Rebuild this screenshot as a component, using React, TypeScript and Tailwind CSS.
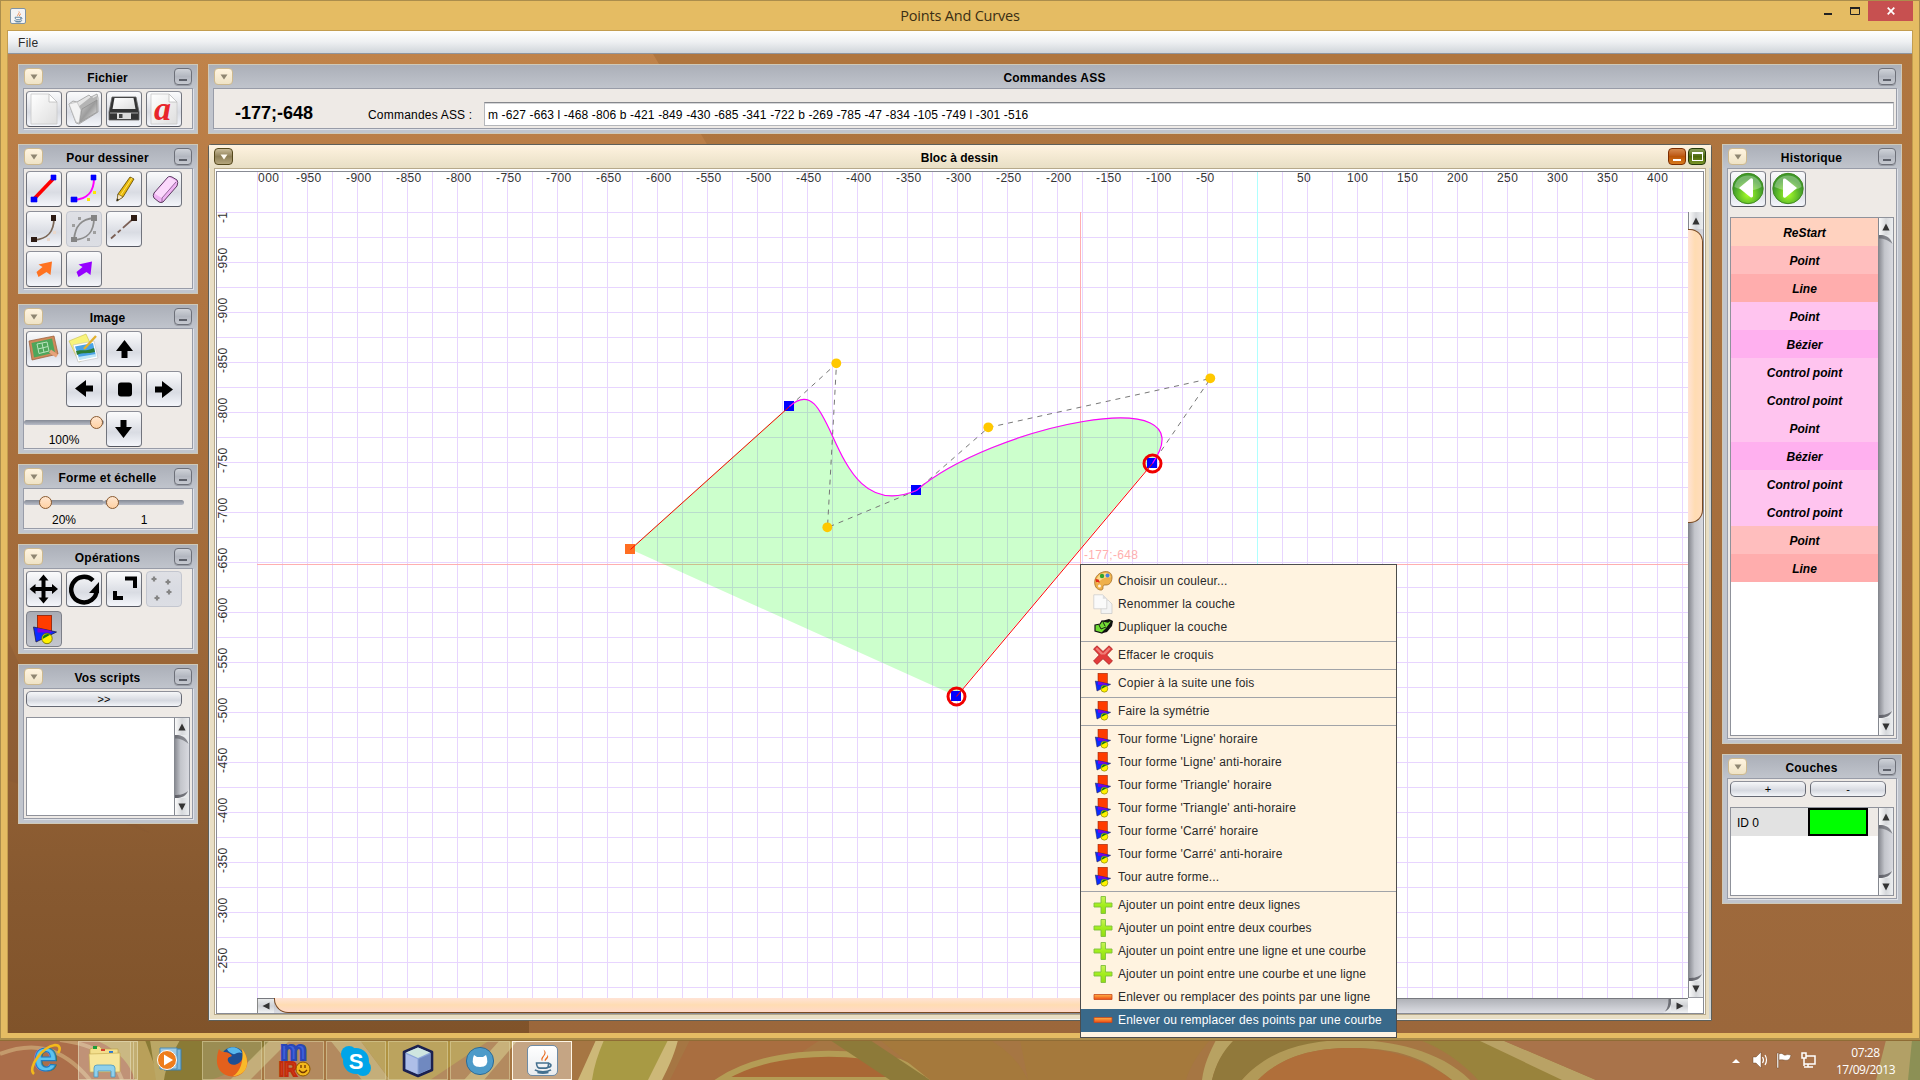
import React from "react";

type Kids = { children?: React.ReactNode };

const DropButton = ({ active = false }: { active?: boolean }) => (
  <div
    className={
      active
        ? "flex h-[17px] w-[19px] items-center justify-center rounded-[4px] border border-[#55481c] bg-linear-to-b from-[#cbbd9a] via-[#8f8058] to-[#b5a67c]"
        : "flex h-[17px] w-[19px] items-center justify-center rounded-[4px] border border-[#cdb98f] bg-linear-to-b from-[#fff4e0] to-[#efe3c6]"
    }
  >
    <svg width="8" height="6" viewBox="0 0 8 6">
      <path d="M0.5 0.5h7L4 5.5z" fill={active ? "#fffaf0" : "#8f8672"} />
    </svg>
  </div>
);

const MinButton = () => (
  <div className="flex h-[17px] w-[18px] items-end justify-center rounded-[4px] border border-[#6d7079] bg-linear-to-b from-[#cfd2d8] via-[#b3b7c0] to-[#c6c9d0] pb-[3px] shadow-[0_1px_0_#9a9da6]">
    <div className="h-[2px] w-2 bg-[#5d6069]" />
  </div>
);

function Panel({ title, className, children }: { title: string; className: string } & Kids) {
  return (
    <section
      className={
        "flex shrink-0 flex-col border border-[#cfc9b8] bg-[#c1c5cd] px-1 pb-1 " + className
      }
    >
      <header className="-mx-1 flex h-[23px] shrink-0 items-center justify-between bg-linear-to-b from-[#abafb8] to-[#c0c4cc] pl-[5px] pr-[5px]">
        <DropButton />
        <h2 className="pt-[3px] pr-[2px] text-[12px] leading-[14px] font-bold tracking-[0.2px] text-black">{title}</h2>
        <MinButton />
      </header>
      <div className="min-h-0 flex-1 border border-[#989ca8] bg-[#eeeae6] pl-[2px] pt-[2px] shadow-[1px_1px_0_#dfe2e8]">
        {children}
      </div>
    </section>
  );
}

function Tool({ disabled, pressed, children }: { disabled?: boolean; pressed?: boolean } & Kids) {
  const tone = disabled
    ? "border-[#c3c6cf] bg-linear-to-b from-[#dfe0e5] via-[#d9dbe2] to-[#dcdee4]"
    : pressed
      ? "border-[#7c7f88] bg-linear-to-b from-[#a9acb5] via-[#b7bac3] to-[#c3c6ce]"
      : "border-t-[#8e9099] border-x-[#71747d] border-b-[#555862] bg-linear-to-b from-[#fbfbfc] via-[#d9dce3] via-60% to-[#f4f6fb]";
  return (
    <div className={"flex size-9 shrink-0 items-center justify-center rounded-[4px] border " + tone}>
      {children}
    </div>
  );
}

const Icon = ({ children, size = 34, view = "0 0 34 34" }: { size?: number; view?: string } & Kids) => (
  <svg width={size} height={size} viewBox={view} className="shrink-0 overflow-visible">
    {children}
  </svg>
);

const Page = () => (
  <>
    <path d="M4 2h18l8 8v22H4z" fill="url(#paper)" stroke="#c9c9c9" strokeWidth="0.8" />
    <path d="M22 2l8 8h-8z" fill="#fff" stroke="#bdbdbd" strokeWidth="0.8" />
  </>
);

const ShapesIcon = ({ size = 34, view = "0 0 34 34" }: { size?: number; view?: string }) => (
  <Icon size={size} view={view}>
    <rect x="10.500" y="3.500" width="14" height="16" fill="#ff3c00" stroke="#8d1c00" strokeWidth="0.8" />
    <path d="M6.500 15l23 5L9 30z" fill="#0a2bff" stroke="#20204a" strokeWidth="0.8" />
    <path d="M10.500 15.900L24.500 19v1.500h-14z" fill="#7d00e0" />
    <circle cx="20" cy="26.500" r="5.200" fill="#fff200" stroke="#6b6600" strokeWidth="0.8" />
    <path d="M15.600 27a5 5 0 0 1 7.600-4.300z" fill="#0c7a14" />
  </Icon>
);

const Arrow = ({ turn }: { turn: number }) => (
  <Icon>
    <g transform={`rotate(${turn} 17 17)`}>
      <path d="M17.500 8l8.500 11h-5.500v7h-6v-7H9z" fill="#000" />
    </g>
  </Icon>
);

const Slant = ({ color }: { color: string }) => (
  <Icon>
    <path d="M11.500 12.500L25 9.500 23.500 23l-4-3-8 5-2-5 6-5z" fill={color} />
  </Icon>
);

const Nav = ({ flip }: { flip?: boolean }) => (
  <Icon>
    <circle cx="17" cy="16.500" r="15.200" fill="url(#nav)" stroke="#3f8a1c" strokeWidth="1" />
    <path d="M3.500 15a13.600 13 0 0 1 27 0c-8 5-18 4-27 0z" fill="#fff" opacity="0.3" />
    <path d="M8 16L19.500 6.500q2.500-.8 2.500 1.500v16q0 2-2.500 1.300z" fill="#fff" transform={flip ? "rotate(180 17 16)" : undefined} />
  </Icon>
);

function VScroll({ thumb, onCanvas }: { thumb?: boolean; onCanvas?: boolean }) {
  return (
    <div className="flex w-[15px] shrink-0 flex-col border-l border-[#85888f] bg-linear-to-r from-[#8b8d94] via-[#c3c5cb] via-40% to-[#d9dae0]">
      <div className="flex h-[17px] shrink-0 items-center justify-center bg-linear-to-r from-[#fafafa] via-[#d6d8db] to-[#eceef0]">
        <svg width="8" height="8" viewBox="0 0 8 8">
          <path d="M4 .5L7.600 7.500H.4z" fill="#333" />
        </svg>
      </div>
      {thumb ? (
        <div className="-ml-px h-[294px] w-[15px] shrink-0 rounded-r-[13px] border border-l-0 border-[#7a4a22] bg-linear-to-r from-[#ffe3d6] via-[#ffdcb2] to-[#ffdcbc]" />
      ) : (
        <svg width="14" height="12" viewBox="0 0 14 12" className="shrink-0">
          <path d="M0 0h3C10 1 13 5 14 11V0z" fill="#e8eaec" />
          <path d="M0 0h3C9 1 12 4 13.500 9 9 5 5 3.500 0 3.500z" fill="#55575d" opacity="0.6" />
        </svg>
      )}
      <div className="flex-1" />
      <svg width="14" height="12" viewBox="0 0 14 12" className="shrink-0">
        <path d="M0 12h3C10 11 13 8 14 2v10z" fill="#e8eaec" />
        <path d="M0 12h3C9 11 11 9 13 5 9 8.500 5 9 0 9z" fill="#4a4c52" opacity="0.7" />
      </svg>
      <div className={"flex h-[17px] shrink-0 items-center justify-center bg-linear-to-r from-[#fafafa] via-[#d6d8db] to-[#eceef0] " + (onCanvas ? "border-b border-[#9a9ca3]" : "")}>
        <svg width="8" height="8" viewBox="0 0 8 8">
          <path d="M4 7.500L7.600 .5H.4z" fill="#333" />
        </svg>
      </div>
    </div>
  );
}

const Slider = ({ at, label }: { at: string; label: string }) => (
  <div className="relative h-9 w-20 shrink-0">
    <div className="mt-[9px] h-[5px] w-20 rounded-full bg-linear-to-b from-[#858a95] to-[#b9bdc8]" />
    <div className={"absolute top-[5px] size-[13px] rounded-full border border-[#8a5a30] bg-linear-to-b from-[#ffe6cf] to-[#ffd1a3] " + at} />
    <p className="mt-2 text-center text-[12px] leading-[14px]">{label}</p>
  </div>
);

const FlatButton = ({ children, className }: { className: string } & Kids) => (
  <div className={"flex h-4 items-center justify-center rounded-[5px] border border-[#666973] border-t-[#8e9099] bg-linear-to-b from-[#f6f7f9] via-[#d6d9e0] via-60% to-[#f4f6fa] text-[11px] leading-none " + className}>
    {children}
  </div>
);

const HISTORY: [string, string][] = [
  ["ReStart", "bg-[#ffd2bf]"],
  ["Point", "bg-[#ffbebe]"],
  ["Line", "bg-[#ffadad]"],
  ["Point", "bg-[#ffc4ef]"],
  ["Bézier", "bg-[#ffb0ef]"],
  ["Control point", "bg-[#ffc4ef]"],
  ["Control point", "bg-[#ffc4ef]"],
  ["Point", "bg-[#ffc4ef]"],
  ["Bézier", "bg-[#ffb0ef]"],
  ["Control point", "bg-[#ffc4ef]"],
  ["Control point", "bg-[#ffc4ef]"],
  ["Point", "bg-[#ffbebe]"],
  ["Line", "bg-[#ffadad]"],
];

function LeftColumn() {
  return (
    <aside className="flex w-[180px] shrink-0 flex-col gap-[10px]">
      <Panel title="Fichier" className="h-[70px]">
        <div className="flex gap-1">
          <Tool><Icon><Page /></Icon></Tool>
          <Tool>
            <Icon>
              <path d="M2 12l4-3 4 1L22 3l2 2 6-3 1 4v14L12 32l-3-1z" fill="#e4e4e4" stroke="#9a9a9a" strokeWidth="0.8" />
              <path d="M11 15L25 4l1 2 4-2v14L14 29z" fill="#b4b4b4" />
              <path d="M15 17l15-9v12L12 31z" fill="url(#steel)" stroke="#8c8c8c" strokeWidth="0.7" />
              <path d="M2 12l8-2 4 8-2 13-3-1z" fill="#f3f3f3" stroke="#b5b5b5" strokeWidth="0.6" />
            </Icon>
          </Tool>
          <Tool>
            <Icon>
              <path d="M5 5h24l3 15v8H2v-8z" fill="#333" stroke="#666" strokeWidth="0.8" />
              <path d="M7.500 6h19l2 11H5.500z" fill="url(#paper)" />
              <path d="M3 20h28v2H3z" fill="#6c6c6c" />
              <path d="M10 21h14v6H10z" fill="#dcdcdc" />
              <path d="M12 22h3.500v4H12z" fill="#444" />
            </Icon>
          </Tool>
          <Tool>
            <Icon>
              <Page />
              <text x="7" y="28" fontFamily="Liberation Serif, serif" fontStyle="italic" fontWeight="bold" fontSize="34" textLength="17" lengthAdjust="spacingAndGlyphs" fill="#e8252a">a</text>
            </Icon>
          </Tool>
        </div>
      </Panel>

      <Panel title="Pour dessiner" className="h-[150px]">
        <div className="flex flex-wrap gap-1">
          <Tool>
            <Icon>
              <path d="M6.500 27.500L27 6" stroke="#f00" strokeWidth="3.600" />
              <path d="M24 3h5v5h-5zM4 25h6v5H4z" fill="#00f" stroke="#00f" strokeWidth="0.6" />
            </Icon>
          </Tool>
          <Tool>
            <Icon>
              <path d="M7 28C20 27 27 21 27 6" stroke="#f0f" strokeWidth="2" fill="none" />
              <path d="M24 3h5v5h-5zM4 25h6v5H4z" fill="#00f" stroke="#00f" strokeWidth="0.6" />
              <path d="M26 19h3v3h-3zM20 26h3v3h-3z" fill="#ffe600" />
            </Icon>
          </Tool>
          <Tool>
            <Icon>
              <path d="M11 22L23 5l4 2-11 18-6 4z" fill="#e8b80a" stroke="#594300" strokeWidth="0.8" />
              <path d="M13.500 23.500L25 6" stroke="#ffe666" />
              <path d="M11 22l5 3-6 4z" fill="#f7e7c5" stroke="#594300" strokeWidth="0.5" />
              <path d="M10 26.500l2 1-2.500 2z" fill="#222" />
            </Icon>
          </Tool>
          <Tool>
            <Icon>
              <path d="M7 21L21 5q2-1 4 0l5 3q1.500 2 0 6L16 30q-2 1-4 0l-5-4q-1.500-2 0-5z" fill="#efb2f3" stroke="#5a3a60" strokeWidth="1" />
              <path d="M8 21L22 5l7 4-14 17-7-4z" fill="#fbd9fc" />
              <path d="M15 26L29 10M15 26v4" stroke="#7d5584" fill="none" strokeWidth="0.8" />
            </Icon>
          </Tool>
          <Tool>
            <Icon>
              <path d="M7 28C20 27 27 21 27 6" stroke="#7b6756" strokeWidth="1.800" fill="none" />
              <path d="M24 3h5v6h-5zM4 25h6v5H4z" fill="#2e1c14" />
              <path d="M26 19h3v3h-3zM20 26h3v3h-3z" fill="#ebd9cc" />
            </Icon>
          </Tool>
          <Tool disabled>
            <Icon>
              <path d="M7 28C8 14 14 7 27 6M7 28C20 27 27 21 27 6" stroke="#8c8c8c" strokeWidth="1.800" fill="none" />
              <path d="M24 3h6v6h-6zM4 25h6v5H4z" fill="#848484" />
              <path d="M11 5h3v3h-3zM5 12h3v3H5zM26 19h3v3h-3zM20 26h3v3h-3z" fill="#9f9f9f" />
            </Icon>
          </Tool>
          <Tool>
            <Icon>
              <path d="M4 26.500L27 6" stroke="#7b6056" strokeWidth="1.800" strokeDasharray="6 3 4 3 30" />
              <path d="M24 3h6v6h-6z" fill="#2e1c14" />
            </Icon>
          </Tool>
          <div className="size-9" />
          <Tool><Slant color="#ff7220" /></Tool>
          <Tool><Slant color="#9600ff" /></Tool>
        </div>
      </Panel>

      <Panel title="Image" className="h-[150px]">
        <div className="flex flex-wrap gap-y-1">
          <div className="flex gap-1">
            <Tool>
              <Icon>
                <path d="M2 9l25-5 4 18L5 28z" fill="#cf8a5b" stroke="#9a5a35" strokeWidth="0.7" />
                <path d="M4.500 11L25 6.500l3 14L7 25.500z" fill="#4fa65a" />
                <path d="M10 12l10-2 2 9-10 2.500zM15 11l2 9.500M11 17l10-2.500" stroke="#b9e4bd" fill="none" />
                <path d="M23 19l7 5" stroke="#e6a27a" strokeWidth="3.500" />
              </Icon>
            </Tool>
            <Tool>
              <Icon>
                <path d="M2 9l17-7 9 20-16 8z" fill="#f8f37b" stroke="#c9c04a" strokeWidth="0.6" />
                <path d="M6 13l21-4 4 17-20 4z" fill="#fff" stroke="#b5b5b5" strokeWidth="0.5" />
                <path d="M8 14.500l18-3.500 3 13-16.500 3.500z" fill="#4aa3e6" />
                <path d="M9 19c6-2 8 1 18-3l1 4c-7 2-12 0-18 3z" fill="#2d7d35" />
                <path d="M11 25l18-3 .6 2.500L12.500 28z" fill="#bfe6f7" />
                <path d="M17 17L29 4" stroke="#e2b02f" strokeWidth="2.400" />
              </Icon>
            </Tool>
            <Tool><Arrow turn={0} /></Tool>
          </div>
          <div className="flex gap-1">
            <div className="size-9" />
            <Tool><Arrow turn={-90} /></Tool>
            <Tool><Icon><rect x="11" y="10.500" width="14" height="14" rx="3" /></Icon></Tool>
            <Tool><Arrow turn={90} /></Tool>
          </div>
          <div className="-ml-[2px] flex gap-[2px]">
            <Slider at="left-[66px]" label="100%" />
            <Tool><Arrow turn={180} /></Tool>
          </div>
        </div>
      </Panel>

      <Panel title="Forme et échelle" className="h-[70px]">
        <div className="-ml-[2px] flex">
          <Slider at="left-[15px]" label="20%" />
          <Slider at="left-[2px]" label="1" />
        </div>
      </Panel>

      <Panel title="Opérations" className="h-[110px]">
        <div className="flex flex-wrap gap-1">
          <Tool>
            <Icon>
              <path d="M16.500 6v22M6 17h22" stroke="#000" strokeWidth="4" />
              <path d="M16.500 2.500l5 6h-10zM16.500 31.500l5-6h-10zM2.500 17l6-5v10zM31 17l-6-5v10z" />
            </Icon>
          </Tool>
          <Tool>
            <Icon>
              <path d="M26 8.500A12.800 12.800 0 1 0 29.800 18" stroke="#000" strokeWidth="4.500" fill="none" />
              <path d="M32 10v11H22z" />
            </Icon>
          </Tool>
          <Tool>
            <Icon>
              <path d="M18 6.500h10V16M8 19v7h8" stroke="#000" strokeWidth="4" fill="none" />
            </Icon>
          </Tool>
          <Tool disabled>
            <Icon>
              <path d="M7 4.500v5M4.500 7h5M21 7.500v5M18.500 10h5M22 17.500v5M19.500 20h5M10 23.500v5M7.500 26h5" stroke="#858585" strokeWidth="2.200" />
            </Icon>
          </Tool>
          <Tool pressed><ShapesIcon /></Tool>
        </div>
      </Panel>

      <Panel title="Vos scripts" className="h-[160px]">
        <FlatButton className="w-[156px]">&gt;&gt;</FlatButton>
        <div className="mt-[10px] flex h-[99px] w-[164px] justify-end border border-[#8f929b] bg-white">
          <VScroll />
        </div>
      </Panel>
    </aside>
  );
}

function RightColumn() {
  return (
    <aside className="flex w-[180px] shrink-0 flex-col gap-[10px]">
      <Panel title="Historique" className="h-[600px]">
        <div className="flex gap-1">
          <Tool><Nav /></Tool>
          <Tool><Nav flip /></Tool>
        </div>
        <div className="mt-[10px] flex h-[519px] w-[164px] border border-[#8f929b] bg-white">
          <ul className="flex-1">
            {HISTORY.map(([label, tone], i) => (
              <li key={i} className={"flex h-7 items-center justify-center pt-[2px] text-[12px] font-bold italic text-black " + tone}>
                {label}
              </li>
            ))}
          </ul>
          <VScroll />
        </div>
      </Panel>
      <Panel title="Couches" className="h-[150px]">
        <div className="flex gap-1">
          <FlatButton className="w-[76px]">+</FlatButton>
          <FlatButton className="w-[76px]">-</FlatButton>
        </div>
        <div className="mt-[10px] flex h-[89px] w-[164px] border border-[#8f929b] bg-white">
          <div className="flex-1">
            <div className="flex h-7 items-center bg-[#eeeae6]">
              <span className="flex h-7 w-[77px] items-center bg-[#e2e2e2] pl-[6px] pt-[2px] text-[12px]">ID 0</span>
              <span className="h-7 w-[60px] border-2 border-black bg-[#00ff00]" />
            </div>
          </div>
          <VScroll />
        </div>
      </Panel>
    </aside>
  );
}

/* Canvas units: 1 unit = 1 px, origin of the drawing at (1257, 1212). */
const GX = Array.from({ length: 58 }, (_, i) => 257 + i * 25);
const GY = Array.from({ length: 32 }, (_, i) => 212 + i * 25);
const XL = Array.from({ length: 28 }, (_, i) => -950 + i * 50).filter((v) => v !== 0);
const YL = Array.from({ length: 15 }, (_, i) => -950 + i * 50);
const ANCHORS = [[789, 406], [916, 490], [1152, 463], [956, 696]];
const CONTROLS = [[836, 363], [827, 527], [988, 427], [1210, 378]];

function Drawing() {
  return (
    <svg width="1486" height="841" viewBox="217 172 1486 841" className="col-start-1 row-start-1 block">
      <g shapeRendering="crispEdges" fill="#e8d5ff">
        {GX.map((x) => <rect key={x} x={x} y="172" width="1" height="826" />)}
        {GY.map((y) => <rect key={y} x="217" y={y} width="1471" height="1" />)}
        <rect x="1257" y="172" width="1" height="826" fill="#afffff" />
        <rect x="1080" y="212" width="1" height="786" fill="#ffafaf" />
        <rect x="257" y="564" width="1431" height="1" fill="#ffafaf" />
      </g>
      <g fontFamily="Liberation Sans, Arial, sans-serif" fontSize="12" fill="#333">
        <text x="258" y="182" textLength="21">000</text>
        {XL.map((v) => (
          <text key={v} x={1257 + v - (v < 0 ? 11 : 10)} y="182" letterSpacing="0.4">{v}</text>
        ))}
        <text transform="translate(227 223) rotate(-90)" letterSpacing="0.33">-1</text>
        {YL.map((v) => (
          <text key={v} transform={`translate(227 ${1212 + v + 11}) rotate(-90)`} letterSpacing="0.4">{v}</text>
        ))}
        <text x="1084" y="559" fill="#ffafaf" textLength="54">-177;-648</text>
      </g>
      <path d="M630 549L789 406C836 363 827 527 916 490C988 427 1210 378 1152 463L956 696z" fill="#00ff00" fillOpacity="0.2" />
      {ANCHORS.map(([x, y]) => <rect key={x} x={x - 5} y={y - 5} width="10" height="10" fill="#0000ff" />)}
      <rect x="625" y="544" width="10" height="10" fill="#ff6e22" />
      <g fill="none" strokeWidth="1" transform="translate(.5 .5)">
        <path d="M789 406L836 363L827 527L916 490L988 427L1210 378L1152 463" stroke="#777" strokeDasharray="5 5" />
        <path d="M630 549L789 406M1152 463L956 696" stroke="#f00" />
        <path d="M789 406C836 363 827 527 916 490C988 427 1210 378 1152 463" stroke="#f0f" strokeWidth="1.200" />
      </g>
      {CONTROLS.map(([x, y]) => <circle key={x} cx={x + 0.3} cy={y + 0.3} r="4.900" fill="#ffc800" />)}
      <g fill="none" stroke="#f00000" strokeWidth="3">
        <circle cx="1152.500" cy="463.500" r="8.500" />
        <circle cx="956.500" cy="696.500" r="8.500" />
      </g>
    </svg>
  );
}

function Canvas() {
  return (
    <section className="flex h-[877px] w-[1504px] shrink-0 flex-col rounded-t-[3px] border border-[#5d5f5a] bg-[#e9dfc5] px-[5px] pb-[5px] shadow-[inset_0_-1px_0_#f3f5f5,inset_-2px_0_0_#cfd5d6,inset_1px_0_0_#e5e8e8]">
      <header className="-mx-[5px] flex h-[23px] shrink-0 items-center bg-linear-to-b from-[#fff3e0] to-[#e8dfc5] px-[5px]">
        <DropButton active />
        <h2 className="flex-1 pt-[3px] pl-[18px] text-center text-[12px] leading-[14px] font-bold text-black">Bloc à dessin</h2>
        <div className="flex gap-[2px]">
          <div className="flex h-[17px] w-[18px] items-end justify-center rounded-[4px] border border-[#7d2d00] bg-linear-to-b from-[#d68b4e] via-[#bb5508] to-[#d77a1c] pb-[3px]">
            <div className="h-[2px] w-2 bg-white" />
          </div>
          <div className="flex h-[17px] w-[18px] items-center justify-center rounded-[4px] border border-[#26390a] bg-linear-to-b from-[#8a9f57] via-[#4d6a0a] to-[#7b9528]">
            <div className="h-[9px] w-[11px] border border-t-2 border-white" />
          </div>
        </div>
      </header>
      <div className="flex-1 border border-[#b6a98b] bg-white px-px pt-[2px]">
        <div className="grid h-[843px] w-[1488px] border border-[#888b94] bg-white">
          <Drawing />
          <div className="col-start-1 row-start-1 flex flex-col">
            <div className="h-10" />
            <div className="flex h-[786px] justify-end">
              <VScroll thumb onCanvas />
            </div>
            <div className="ml-10 flex h-[15px] w-[1431px] border-t border-[#77797f] bg-linear-to-b from-[#b0b2b8] to-[#dcdde3]">
              <div className="flex w-[17px] items-center justify-center border-l border-[#888] bg-linear-to-b from-[#e9ebec] via-[#cfd1d4] to-[#f2f3f4]">
                <svg width="8" height="8" viewBox="0 0 8 8"><path d="M7.500 .6v6.800L.5 4z" fill="#333" /></svg>
              </div>
              <div className="-mt-px h-[15px] w-[980px] rounded-bl-[14px] border-b border-l border-[#7a4a22] bg-linear-to-b from-[#ffe3d6] via-[#ffdcb2] to-[#ffd9c9]" />
              <div className="flex-1" />
              <svg width="9" height="14" viewBox="0 0 9 14"><path d="M9 0v14H1C6 12 9 8 9 0z" fill="#e8eaec" /><path d="M9 0v5C8 9 6 11 3 12.500 6 9 6.500 5 6.500 0z" fill="#4a4c52" opacity="0.7" /></svg>
              <div className="flex w-[17px] items-center justify-center bg-linear-to-b from-[#e9ebec] via-[#cfd1d4] to-[#f2f3f4]">
                <svg width="8" height="8" viewBox="0 0 8 8"><path d="M.5 .6v6.800L7.500 4z" fill="#333" /></svg>
              </div>
            </div>
          </div>
        </div>
      </div>
    </section>
  );
}

type Entry = { label: string; icon: "palette" | "pages" | "dup" | "cross" | "shapes" | "plus" | "minus" } | null;
const MENU: Entry[] = [
  { label: "Choisir un couleur...", icon: "palette" },
  { label: "Renommer la couche", icon: "pages" },
  { label: "Dupliquer la couche", icon: "dup" },
  null,
  { label: "Effacer le croquis", icon: "cross" },
  null,
  { label: "Copier à la suite une fois", icon: "shapes" },
  null,
  { label: "Faire la symétrie", icon: "shapes" },
  null,
  { label: "Tour forme 'Ligne' horaire", icon: "shapes" },
  { label: "Tour forme 'Ligne' anti-horaire", icon: "shapes" },
  { label: "Tour forme 'Triangle' horaire", icon: "shapes" },
  { label: "Tour forme 'Triangle' anti-horaire", icon: "shapes" },
  { label: "Tour forme 'Carré' horaire", icon: "shapes" },
  { label: "Tour forme 'Carré' anti-horaire", icon: "shapes" },
  { label: "Tour autre forme...", icon: "shapes" },
  null,
  { label: "Ajouter un point entre deux lignes", icon: "plus" },
  { label: "Ajouter un point entre deux courbes", icon: "plus" },
  { label: "Ajouter un point entre une ligne et une courbe", icon: "plus" },
  { label: "Ajouter un point entre une courbe et une ligne", icon: "plus" },
  { label: "Enlever ou remplacer des points par une ligne", icon: "minus" },
  { label: "Enlever ou remplacer des points par une courbe", icon: "minus" },
];

function MenuIcon({ icon }: { icon: string }) {
  if (icon === "shapes") return <ShapesIcon size={20} view="3 3 30 30" />;
  return (
    <Icon size={20} view="0 0 20 20">
      {icon === "palette" && (
        <>
          <path d="M10 1c5-1.500 9.500 1 9 6-.4 5-3 7-6 7-3-.3-3 1-3 3 0 3-4 2.500-6.500 0C-.5 12 2 3 10 1z" fill="#efb04a" stroke="#a4702a" strokeWidth="0.8" />
          <path d="M9 2.500c4-1.500 8.500 0 8.500 4-5-1-10 2-13 6C2.500 8 5 4 9 2.500z" fill="#fbd98c" />
          <path d="M2.500 8l3 .5 1.500 3-4-.5z" fill="#e22a1a" />
          <circle cx="9" cy="5" r="2.200" fill="#35a32b" />
          <circle cx="14.500" cy="4.500" r="2" fill="#4a7fe0" />
          <circle cx="6.500" cy="15" r="1.500" fill="#fff3e0" />
        </>
      )}
      {icon === "pages" && (
        <>
          <path d="M8 6h7l4 4v9.500H8z" fill="#f3f3f3" stroke="#c5c5c5" strokeWidth="0.7" />
          <path d="M.8.800h9l4 4v10H.8z" fill="#fafafa" stroke="#c8c8c8" strokeWidth="0.7" />
          <path d="M9.800.800v4h4z" fill="#ddd" />
        </>
      )}
      {icon === "dup" && (
        <>
          <path d="M9 4l7-2 4 2-1 5-5 6-4 1z" fill="#111" />
          <path d="M2 8l5-1 2-3 6 1 2-1.500 1.500 1L13 12l-4 4-7-2z" fill="#72dc34" stroke="#111" strokeWidth="1.200" />
          <path d="M6 8l2 4 5-2M10 5l2 4" stroke="#111" fill="none" strokeWidth="0.9" />
        </>
      )}
      {icon === "cross" && (
        <>
          <path d="M4 .8L10 6.500l6-5.700L19.500 4l-5.700 6 5.700 6-3.500 3.400-6-5.600-6 5.600L.5 16l5.700-6L.5 4z" fill="#e23b3b" stroke="#a31d1d" strokeWidth="0.7" />
          <path d="M4 2.500l6 5.700L16 2.500l1.500 1.500L12 9.500H8L2.500 4z" fill="#f79a92" opacity="0.7" />
        </>
      )}
      {icon === "plus" && <path d="M8 1.500h4.500V8H19v4h-6.500v6.500H8V12H1V8h7z" fill="url(#lime)" stroke="#7ec03c" strokeWidth="0.9" />}
      {icon === "minus" && <path d="M1 7.500h18v5H1z" fill="url(#ember)" stroke="#c8481a" strokeWidth="0.8" />}
    </Icon>
  );
}

function ContextMenu() {
  return (
    <ul className="absolute top-[564px] left-[1080px] z-30 flex h-[474px] w-[317px] flex-col border border-[#4c4c4c] bg-[#fff3e0] pt-[4.5px] text-[12px]">
      {MENU.map((m, i) =>
        m === null ? (
          <li key={i} className="flex h-[5px] shrink-0 items-center"><div className="h-px w-full bg-[#a1a3a8]" /></li>
        ) : (
          <li
            key={i}
            className={
              "flex h-[23px] shrink-0 items-center gap-[5px] pl-3 whitespace-nowrap " +
              (i === MENU.length - 1 ? "bg-[#39698a] text-white" : "text-[#2a2a2a]")
            }
          >
            <MenuIcon icon={m.icon} />
            <span className={m.icon === "plus" ? "tracking-[0.1px]" : "tracking-[0.17px]"}>{m.label}</span>
          </li>
        ),
      )}
    </ul>
  );
}

const JavaCup = ({ size }: { size: number }) => (
  <svg width={size} height={size} viewBox="0 0 34 34">
    <path d="M17 18c-5-5 6-7 1-14 7 5-2 8-1 14zM20 18c-2-3 3-4 3-8 2 4-1 5-3 8z" fill="#ea6b1e" />
    <path d="M10 20h14v2c0 3-2 4-3 4h-7c-2 0-4-2-4-6zM24 21c4-1 4 4-1 4M8 28c5 3 14 3 19 0M11 31c4 1 9 1 13 0" fill="none" stroke="#44708f" strokeWidth="1.900" />
  </svg>
);

const Slot = ({ active, children }: { active?: boolean } & Kids) => (
  <div
    className={
      "flex h-[39px] w-[60px] items-center justify-center border " +
      (active ? "border-[#fff6e6] bg-[#ffffff59]" : "border-[#d9cd9a99] bg-[#ffffff26]")
    }
  >
    {children}
  </div>
);

function Taskbar() {
  return (
    <footer className="grid h-10 w-[1920px]">
      <svg width="1920" height="40" viewBox="0 0 1920 40" className="col-start-1 row-start-1">
        <rect width="1920" height="40" fill="#a67643" />
        <path d="M0 0h140v40H0z" fill="#ab6e4a" />
        <path d="M0 14C30 2 60 4 90 40M60 0c40 5 55 20 62 40" fill="none" stroke="#c49a6c" strokeWidth="4" />
        <path d="M95 0h50c10 12 14 26 16 40h-26C130 22 115 8 95 0z" fill="#b9a05a" />
        <path d="M145 0h125c-10 18-35 32-60 40h-50z" fill="#8a7a35" />
        <path d="M150 0h30c-8 14-14 26-16 40h-8z" fill="#bba765" />
        <path d="M270 0h20L250 40h-20zM330 0h30l30 40h-28z" fill="#bfab6c" opacity="0.8" />
        <path d="M360 0h130l-60 40h-40z" fill="#b09342" />
        <path d="M500 0h18l-34 40h-20z" fill="#c5b06c" opacity="0.8" />
        <path d="M596 0h76c-4 14-10 26-20 40h-70z" fill="#a89a44" />
        <path d="M596 0h8c-6 14-10 26-12 40h-14zM668 0h10c-4 16-10 28-16 40h-14z" fill="#cdb878" />
        <path d="M690 0h130L760 40h-90z" fill="#a96e40" />
        <path d="M720 40C760 14 830 6 900 22l40 18z" fill="#a96735" stroke="#b49c55" strokeWidth="6" />
        <path d="M830 0h40l60 40h-40z" fill="#8d7a39" />
        <path d="M880 0h110c20 12 30 24 38 40H930z" fill="#a5793c" />
        <path d="M1020 0h190c-12 14-20 26-24 40H1028z" fill="#a5793c" />
        <path d="M1216 0h18c-12 14-18 24-22 40h-10c2-16 8-28 14-40z" fill="#b8a262" />
        <path d="M1234 0h108c-50 6-84 20-100 40h-30c4-16 10-28 22-40z" fill="#91793b" />
        <path d="M1242 40C1270 8 1310 0 1350 0s90 10 120 40h-18C1420 14 1390 8 1350 8s-70 10-92 32z" fill="#b29a58" />
        <path d="M1258 40c24-24 56-32 92-32s72 10 102 32z" fill="#b06f3a" />
        <path d="M1420 0h60l108 40h-110C1460 20 1440 8 1420 0z" fill="#99833c" />
        <path d="M1478 0h24l94 40h-34z" fill="#b9a265" />
        <path d="M1502 0h384v40h-290z" fill="#a9734a" />
        <path d="M1886 0h34v40h-44z" fill="#b2a066" />
        <path d="M1912 0h8v40h-12z" fill="#8c9055" />
        <rect width="1920" height="1" fill="#8f6c35" />
      </svg>
      <div className="z-10 col-start-1 row-start-1 flex items-end">
        <div className="flex h-10 w-[78px] items-center justify-end pr-4">
          <svg width="32" height="32" viewBox="0 0 32 32" className="overflow-visible">
            <text x="15.500" y="27" textAnchor="middle" fontFamily="Liberation Sans, sans-serif" fontWeight="bold" fontSize="43" fill="#5cc3f0" stroke="#1f7cc0" strokeWidth="1.200">e</text>
            <path d="M4 30C-3 24 12 3 25 1c5 0 6 4 3 8" fill="none" stroke="#f3b91b" strokeWidth="2.600" />
          </svg>
        </div>
        <div className="flex">
          <div className="flex h-[39px] w-[53px] items-center justify-center border border-[#e6dcb899] bg-[#ffffff40]">
            <svg width="34" height="34" viewBox="0 0 34 34">
              <path d="M2 5l9-3 3 3h16v8H2z" fill="#f3df8c" stroke="#bfa44a" strokeWidth="0.7" />
              <path d="M5 2h4v3H5z" fill="#1b9e3a" /><path d="M13 5h4v2h-4z" fill="#d6402c" /><path d="M21 7h4v2h-4z" fill="#2a7ad6" />
              <path d="M1 10l31-1v19H2z" fill="#f7e69b" stroke="#c7ad55" strokeWidth="0.7" />
              <path d="M6 33V24q0-3 3-3h14q4 0 4 3v9h-4v-6H10v6z" fill="#8fd0ec" stroke="#4a97be" strokeWidth="0.8" />
            </svg>
          </div>
          <div className="w-[3px] border-y border-r border-[#e6dcb899] bg-[#ffffff26]" />
          <div className="w-[4px] border-y border-r border-[#e6dcb899] bg-[#ffffff26]" />
        </div>
        <div className="flex h-10 w-[64px] items-center justify-center">
          <svg width="28" height="28" viewBox="0 0 28 28">
            <path d="M8 3h17v21H8z" fill="#7db6d8" stroke="#3d7ea8" /><path d="M4 2h17v21H4z" fill="#9fcbe5" stroke="#4a8ab5" />
            <circle cx="11" cy="14" r="9.500" fill="#ee7d1c" stroke="#fff" strokeWidth="1" /><path d="M8 8.500v11l9-5.500z" fill="#fff" />
          </svg>
        </div>
        <div className="flex gap-[2px]">
          <Slot>
            <svg width="32" height="32" viewBox="0 0 32 32">
              <circle cx="17" cy="14" r="12" fill="#1d4f94" />
              <path d="M11 4c6-4 13-1 15 4-4-2-7 2-9 1s-5-2-6-5z" fill="#58b8ec" />
              <path d="M3 4c1 2 3 3 5 3 4 0 7 2 8 4-3 1-5 2-4 5 1 4 7 5 11 2 4-3 5-8 3-14 5 5 7 13 4 19-3 6-8 9-14 8.500C6 31 0 23 1 14c0-4 1-7 2-10z" fill="#e4601c" />
              <path d="M26 4c5 5 7 15 3 21-3 4-8 6-12 6 7-4 11-15 9-27z" fill="#f9b92a" />
            </svg>
          </Slot>
          <Slot>
            <svg width="34" height="34" viewBox="0 0 34 34" className="overflow-visible">
              <text x="3" y="16" fontFamily="Liberation Sans, sans-serif" fontWeight="bold" fontSize="27" textLength="27" lengthAdjust="spacingAndGlyphs" fill="#4061dd" stroke="#2a46b8" strokeWidth="2">m</text>
              <text x="2" y="32" fontFamily="Liberation Sans, sans-serif" fontWeight="bold" fontSize="20" textLength="18" lengthAdjust="spacingAndGlyphs" fill="#e6411b" stroke="#c02c0c" strokeWidth="2">IR</text>
              <circle cx="26" cy="25" r="7" fill="#f3b81c" stroke="#8b5600" />
              <path d="M22 26q4 5 8 0M24 21v3M28 21v3" stroke="#713500" fill="none" strokeWidth="1.300" />
            </svg>
          </Slot>
          <Slot>
            <svg width="32" height="32" viewBox="0 0 32 32">
              <circle cx="16" cy="16" r="13" fill="#00a5e8" /><circle cx="9" cy="9" r="8" fill="#00a5e8" /><circle cx="23" cy="23" r="8" fill="#00a5e8" />
              <text x="16" y="23.500" textAnchor="middle" fontFamily="Liberation Sans, sans-serif" fontWeight="bold" fontSize="22" fill="#fff">S</text>
            </svg>
          </Slot>
          <Slot>
            <svg width="32" height="34" viewBox="0 0 32 34">
              <path d="M16 2l14 6v18l-14 6L2 26V8z" fill="#8ba5d8" stroke="#1b2150" strokeWidth="2.600" strokeLinejoin="round" />
              <path d="M16 3.500L28 8.500 16 14 4 8.500z" fill="#cfe6e0" /><path d="M4 10l11.500 5v15L4 25z" fill="#aebfe8" /><path d="M16.500 15L28 10v15l-11.500 5z" fill="#7089c0" />
            </svg>
          </Slot>
          <Slot>
            <svg width="30" height="30" viewBox="0 0 30 30">
              <circle cx="15" cy="15" r="13.600" fill="#4d9bc9" stroke="#2d6b96" />
              <path d="M9 9l3 2h6l3-2 1 3q2 9-7 9t-7-9z" fill="#fff" />
            </svg>
          </Slot>
          <Slot active>
            <div className="rounded-[5px] border border-[#6e8ba5] bg-linear-to-b from-white to-[#e9ecef]"><JavaCup size={29} /></div>
          </Slot>
        </div>
        <div className="flex flex-1 items-center justify-end pr-[6px]">
          <svg width="86" height="22" viewBox="0 0 86 22" className="mb-px">
            <path d="M1 14l4-4 4 4z" fill="#fff" />
            <g fill="#fff" stroke="#5a3b22" strokeWidth="0.400">
              <path d="M22 8h3l5-5v16l-5-5h-3z" />
              <path d="M46 4h1.600v15H46zM48 5c4-2 4 2 7 1 2-1 3 0 5 0-1 3-1 4-3 5-3 1-5-1-9 0z" />
            </g>
            <path d="M31.500 8q2 3 0 6M34 6q3 5 0 10" stroke="#fff" fill="none" strokeWidth="1.200" />
            <path d="M75 7h9v8H73M77 15v3M73 18h9M71 4h4v5h-4zM73 9v8" stroke="#fff" fill="none" strokeWidth="1.500" />
          </svg>
          <div className="flex h-10 w-[97px] flex-col items-center justify-between pt-[5px] pb-[3px] font-['Open_Sans',sans-serif] text-[12px] leading-[15px] tracking-[-0.45px] text-white">
            <span>07:28</span>
            <span>17/09/2013</span>
          </div>
        </div>
      </div>
    </footer>
  );
}

export default function App() {
  return (
    <div className="relative h-[1080px] w-[1920px] overflow-hidden bg-[#e5bc63] font-['Liberation_Sans',Arial,sans-serif] text-black">
      <svg width="0" height="0" className="absolute">
        <defs>
          <linearGradient id="paper" x2="1" y2="1"><stop stopColor="#fff" /><stop offset="1" stopColor="#dedede" /></linearGradient>
          <linearGradient id="steel" x2="1" y2="1"><stop stopColor="#d8d8d8" /><stop offset="0.500" stopColor="#9c9c9c" /><stop offset="1" stopColor="#f5f5f5" /></linearGradient>
          <linearGradient id="lime" x2="0" y2="1"><stop stopColor="#c9f25a" /><stop offset="0.500" stopColor="#a2ee1c" /><stop offset="1" stopColor="#93db15" /></linearGradient>
          <linearGradient id="ember" x2="0" y2="1"><stop stopColor="#ffb347" /><stop offset="1" stopColor="#ee4a12" /></linearGradient>
          <radialGradient id="nav" cy="0.700"><stop stopColor="#a8ff28" /><stop offset="0.700" stopColor="#5cb82a" /><stop offset="1" stopColor="#3f9a2c" /></radialGradient>
        </defs>
      </svg>

      <div className="flex h-[1040px] flex-col border border-b-2 border-[#ab8d4c]">
        <div className="flex h-[29px] shrink-0 items-center">
          <div className="flex w-[280px] pl-[9px]">
            <div className="size-4 rounded-[2px] border border-[#7f93a3] bg-[#f4f4f4]"><JavaCup size={14} /></div>
          </div>
          <h1 className="flex-1 text-center font-['Open_Sans',sans-serif] text-[14.500px] leading-[20px] tracking-[-0.2px] text-[#3a2e14]">Points And Curves</h1>
          <div className="flex h-[29px] w-[280px] items-start justify-end pr-[6px]">
            <svg width="53" height="20" viewBox="0 0 53 20">
              <path d="M9 12h8v2H9z" fill="#222" />
              <path d="M35 7h9v7h-9z" fill="none" stroke="#222" strokeWidth="1" transform="translate(.5 -.5)" /><path d="M35 6h10v2H35z" fill="#222" />
            </svg>
            <div className="flex h-5 w-[45px] items-center justify-center bg-[#c75050]">
              <svg width="8" height="8" viewBox="0 0 8 8"><path d="M.7.700l6.600 6.600M7.300.700L.7 7.300" stroke="#fff" strokeWidth="1.700" /></svg>
            </div>
          </div>
        </div>

        <div className="mx-[6px] flex h-[1003px] flex-col border border-[#c39d50] bg-[#9c683c]">
          <nav className="flex h-[23px] shrink-0 items-center border-b border-[#8f959e] bg-linear-to-b from-white via-[#eef0f2] to-[#d0d5da] pt-[2px] pl-[10px] text-[12px] tracking-[0.3px] text-[#2a2a2a]">
            File
          </nav>
          <main className="grid flex-1">
            <svg width="1904" height="979" viewBox="8 54 1904 979" className="col-start-1 row-start-1">
              <defs>
                <linearGradient id="woodL" x2="0" y2="1"><stop stopColor="#c0834a" /><stop offset="0.250" stopColor="#b07541" /><stop offset="0.550" stopColor="#a16a39" /><stop offset="0.850" stopColor="#875930" /><stop offset="1" stopColor="#80532a" /></linearGradient>
                <linearGradient id="woodR" x2="0" y2="1"><stop stopColor="#b0763f" /><stop offset="1" stopColor="#9b673b" /></linearGradient>
              </defs>
              <rect x="8" y="54" width="1904" height="979" fill="url(#woodR)" />
              <path d="M8 54h645L800 300 529 900v133H8z" fill="url(#woodL)" />
              <path d="M8 640C30 690 90 800 150 833L8 780z" fill="#875a36" opacity="0.350" />
            </svg>
            <div className="z-10 col-start-1 row-start-1 flex gap-[10px] pt-[10px] pl-[10px]">
              <LeftColumn />
              <div className="flex flex-col gap-[10px]">
                <Panel title="Commandes ASS" className="h-[70px] w-[1694px]">
                  <div className="flex h-full">
                    <p className="w-[131px] shrink-0 pt-[10px] pl-[19px] text-[18px] leading-[24px] font-bold">-177;-648</p>
                    <p className="w-[127px] shrink-0 pt-4 pl-[21px] text-[12px] leading-[16px] tracking-[0.2px] whitespace-nowrap">Commandes ASS :</p>
                    <div className="mt-[11px] mr-[2px] ml-[10px] flex h-6 flex-1 items-center border border-[#b4b6ba] border-t-[#85878c] bg-white pt-[2px] pl-[3px] text-[12px] tracking-[0.13px] shadow-[inset_0_1px_0_#d5d6d8]">
                      m -627 -663 l -468 -806 b -421 -849 -430 -685 -341 -722 b -269 -785 -47 -834 -105 -749 l -301 -516
                    </div>
                  </div>
                </Panel>
                <div className="flex gap-[10px]">
                  <Canvas />
                  <RightColumn />
                </div>
              </div>
            </div>
          </main>
        </div>
      </div>

      <Taskbar />
      <ContextMenu />
    </div>
  );
}
